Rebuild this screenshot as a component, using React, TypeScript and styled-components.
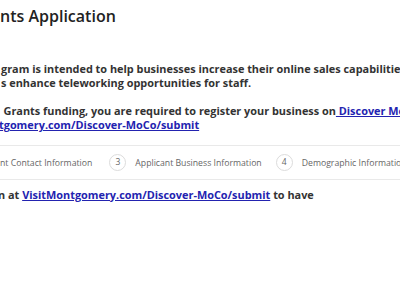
import React from "react";
import styled, { createGlobalStyle } from "styled-components";

const Global = createGlobalStyle`
  html, body { margin: 0; padding: 0; background: #fff; }
  body { width: 400px; height: 284px; overflow: hidden; font-family: "Open Sans", "DejaVu Sans", sans-serif; }
`;

const Page = styled.div`
  width: 400px;
  height: 284px;
  overflow: hidden;
  display: flex;
  flex-direction: column;
`;

const Title = styled.h1`
  margin: 6px 0 0 0;
  font-size: 16px;
  line-height: 20px;
  font-weight: 600;
  color: #222;
  white-space: nowrap;
`;

const Paragraph = styled.div<{ $top: number }>`
  margin-top: ${(p) => p.$top}px;
  display: flex;
  flex-direction: column;
  font-size: 10.9px;
  line-height: 14px;
  font-weight: 700;
  color: #333;
`;

const Line = styled.div<{ $indent?: number }>`
  white-space: pre;
  margin-left: ${(p) => p.$indent ?? 0}px;
`;

const Link = styled.a`
  color: #2323b0;
  text-decoration: underline;
  cursor: pointer;
`;

const StepBar = styled.div`
  margin-top: 13px;
  height: 33px;
  border-top: 1px solid #e9e9e9;
  border-bottom: 1px solid #e9e9e9;
  display: flex;
  align-items: center;
  white-space: nowrap;
`;

const Step = styled.div<{ $gap?: number }>`
  display: flex;
  align-items: center;
  gap: 9px;
  margin-left: ${(p) => p.$gap ?? 0}px;
  flex-shrink: 0;
`;

const StepCircle = styled.span`
  box-sizing: border-box;
  width: 17px;
  height: 17px;
  border-radius: 50%;
  border: 1.5px solid #dcdcdc;
  display: inline-flex;
  align-items: center;
  justify-content: center;
  font-size: 8.5px;
  color: #666;
  line-height: 1;
`;

const StepLabel = styled.span`
  font-size: 8.7px;
  color: #666;
`;

export default function App() {
  return (
    <>
      <Global />
      <Page>
        <Title>nts Application</Title>
        <Paragraph $top={35.5}>
          <Line $indent={1}>gram is intended to help businesses increase their online sales capabilities</Line>
          <Line $indent={1}>s enhance teleworking opportunities for staff.</Line>
        </Paragraph>
        <Paragraph $top={14.5}>
          <Line $indent={3.5}>
            Grants funding, you are required to register your business on
            <Link> Discover MoCo</Link>
          </Line>
          <Line $indent={-1}>
            <Link>tgomery.com/Discover-MoCo/submit</Link>
          </Line>
        </Paragraph>
        <StepBar>
          <Step>
            <StepLabel>nt Contact Information</StepLabel>
          </Step>
          <Step $gap={17}>
            <StepCircle>3</StepCircle>
            <StepLabel>Applicant Business Information</StepLabel>
          </Step>
          <Step $gap={14}>
            <StepCircle>4</StepCircle>
            <StepLabel>Demographic Information</StepLabel>
          </Step>
        </StepBar>
        <Paragraph $top={7.5}>
          <Line $indent={-2}>
            n at <Link>VisitMontgomery.com/Discover-MoCo/submit</Link> to have
          </Line>
        </Paragraph>
      </Page>
    </>
  );
}
